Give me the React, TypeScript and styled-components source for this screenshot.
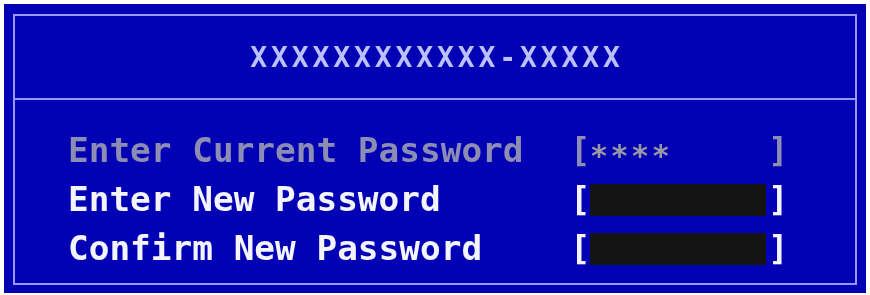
import React from "react";
import styled, { createGlobalStyle } from "styled-components";

const Global = createGlobalStyle`
  html, body { margin: 0; padding: 0; background: #ffffff; }
  #root { width: 870px; height: 295px; }
`;

const MONO = `"DejaVu Sans Mono", "Liberation Mono", monospace`;

const Screen = styled.div`
  box-sizing: border-box;
  width: 870px;
  height: 295px;
  padding: 4px 4px 2px 4px;
`;

const Panel = styled.div`
  box-sizing: border-box;
  height: 100%;
  background: #0202b4;
  padding: 10px 9px 8px 9px;
`;

const Frame = styled.div`
  box-sizing: border-box;
  height: 100%;
  border: 2px solid #9696ff;
  display: flex;
  flex-direction: column;
`;

const Header = styled.div`
  height: 82px;
  flex: none;
  display: flex;
  align-items: center;
  justify-content: center;
  border-bottom: 2px solid #9696ff;
`;

const Title = styled.div`
  font-family: ${MONO};
  font-weight: bold;
  font-size: 28px;
  letter-spacing: 3.9px;
  color: #bcc0ff;
  padding-left: 4px;
  filter: blur(0.3px);
`;

const Body = styled.div`
  display: flex;
  flex-direction: column;
  padding: 26px 0 0 53px;
`;

const Row = styled.div`
  display: grid;
  grid-template-columns: 502px auto;
  align-items: center;
  height: 49px;
`;

const Label = styled.div<{ $dim?: boolean }>`
  font-family: ${MONO};
  font-weight: bold;
  font-size: 34.4px;
  line-height: 49px;
  white-space: pre;
  color: ${(p) => (p.$dim ? "#8c8cb4" : "#f4f4ff")};
  filter: blur(0.3px);
`;

const Field = styled.div<{ $dim?: boolean }>`
  display: flex;
  align-items: center;
  font-family: ${MONO};
  font-weight: bold;
  font-size: 34px;
  line-height: 49px;
  color: ${(p) => (p.$dim ? "#8c8cb4" : "#f4f4ff")};
  filter: blur(0.3px);
`;

const Bracket = styled.span`
  display: inline-block;
  width: 16px;
  text-align: center;
`;

const Value = styled.div<{ $filled?: boolean }>`
  box-sizing: border-box;
  width: 176px;
  height: 32px;
  margin: 0 2px 0 4px;
  background: ${(p) => (p.$filled ? "#141414" : "transparent")};
  color: #9a9aa6;
  font-size: 30px;
  line-height: 32px;
  letter-spacing: 2.5px;
  display: flex;
  align-items: center;
  padding-top: 11px;
  padding-left: 0;
`;

const rows = [
  { label: "Enter Current Password", dim: true, value: "****", filled: false },
  { label: "Enter New Password", dim: false, value: "", filled: true },
  { label: "Confirm New Password", dim: false, value: "", filled: true },
];

export default function App() {
  return (
    <>
      <Global />
      <Screen>
        <Panel>
          <Frame>
            <Header>
              <Title>XXXXXXXXXXXX-XXXXX</Title>
            </Header>
            <Body>
              {rows.map((r) => (
                <Row key={r.label}>
                  <Label $dim={r.dim}>{r.label}</Label>
                  <Field $dim={r.dim}>
                    <Bracket>[</Bracket>
                    <Value $filled={r.filled}>{r.value}</Value>
                    <Bracket>]</Bracket>
                  </Field>
                </Row>
              ))}
            </Body>
          </Frame>
        </Panel>
      </Screen>
    </>
  );
}
